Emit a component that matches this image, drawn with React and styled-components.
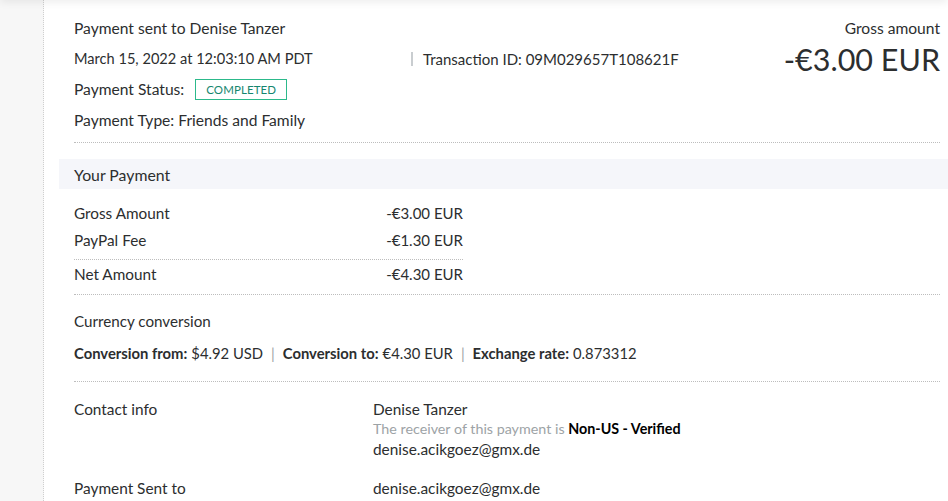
import React from "react";
import styled, { createGlobalStyle } from "styled-components";

const Global = createGlobalStyle`
  html, body { margin: 0; padding: 0; background: #fff; }
  body { font-family: Lato, "Noto Sans", sans-serif; color: #2c2e2f; }
`;

const Page = styled.div`
  display: flex;
  width: 948px;
  height: 501px;
  overflow: hidden;
  position: relative;
`;

const TopShadow = styled.div`
  position: absolute;
  left: 0;
  right: 0;
  top: -10px;
  height: 10px;
  box-shadow: 0 2px 8px rgba(0, 0, 0, 0.08);
`;

const Gutter = styled.div`
  width: 43px;
  flex: none;
  background: #f7f7f7;
  border-right: 1px dotted #cfcfcf;
`;

const Main = styled.div`
  flex: 1;
  padding: 13px 0 0 15px;
  min-width: 0;
`;

const Inset = styled.div`
  padding: 0 8px 0 15px;
`;

const Header = styled.div`
  display: flex;
  justify-content: space-between;
`;

const HeaderLeft = styled.div`
  display: flex;
  flex-direction: column;
`;

const Line = styled.div`
  height: ${(p) => p.$h || 30}px;
  display: flex;
  align-items: center;
  font-size: ${(p) => p.$fs || 15.6}px;
  white-space: nowrap;
`;

const DateText = styled.span`
  width: 337px;
  font-size: 14.6px;
`;

const Divider = styled.span`
  display: inline-block;
  width: 2px;
  height: 14px;
  background: #c9cdd0;
  margin-right: 10px;
`;

const Badge = styled.span`
  margin-left: 11px;
  border: 1px solid #2cb98b;
  color: #16866e;
  font-size: 11.5px;
  letter-spacing: 0.1px;
  height: 19px;
  padding: 0 10px;
  display: inline-flex;
  align-items: center;
`;

const HeaderRight = styled.div`
  display: flex;
  flex-direction: column;
  align-items: flex-end;
`;

const GrossLabel = styled.div`
  font-size: 15.6px;
  line-height: 30px;
`;

const BigAmount = styled.div`
  font-size: 30.5px;
  line-height: 34px;
  margin-top: -1px;
`;

const Dotted = styled.div`
  border-top: 1px dotted #bdbdbd;
  margin: ${(p) => p.$m || "0"};
`;

const Band = styled.div`
  background: #f5f6fa;
  height: 30px;
  display: flex;
  align-items: center;
  padding-left: 15px;
  font-size: 15.8px;
  margin-top: 16px;
`;

const Table = styled.div`
  width: 389px;
  padding-top: 10px;
`;

const Row = styled.div`
  display: flex;
  justify-content: space-between;
  height: 27px;
  align-items: center;
  font-size: 15.3px;
`;

const Amount = styled.span`
  font-size: 15px;
`;

const SubTitle = styled.div`
  font-size: 15.2px;
  height: 26px;
  display: flex;
  align-items: center;
  margin-top: 13px;
`;

const ConvLine = styled.div`
  font-size: 14.8px;
  height: 30px;
  display: flex;
  align-items: center;
  margin-top: 4px;
  white-space: nowrap;
  b { font-weight: 700; margin-right: 4px; }
`;

const Pipe = styled.span`
  color: #9da3a6;
  margin: 0 8px;
`;

const InfoRow = styled.div`
  display: flex;
  font-size: 15.4px;
  margin-top: ${(p) => p.$mt || 0}px;
`;

const InfoLabel = styled.div`
  width: 299px;
  flex: none;
  line-height: 20px;
`;

const InfoValue = styled.div`
  display: flex;
  flex-direction: column;
  line-height: 20px;
`;

const Muted = styled.span`
  color: #9da3a6;
  font-size: 14.3px;
  b { color: #000; font-weight: 700; }
`;

export default function App() {
  return (
    <>
      <Global />
      <Page>
        <TopShadow />
        <Gutter />
        <Main>
          <Inset>
            <Header>
              <HeaderLeft>
                <Line>Payment sent to Denise Tanzer</Line>
                <Line $h={31} $fs={15}>
                  <DateText>March 15, 2022 at 12:03:10 AM PDT</DateText>
                  <Divider />
                  Transaction ID: 09M029657T108621F
                </Line>
                <Line>
                  Payment Status:
                  <Badge>COMPLETED</Badge>
                </Line>
                <Line $h={31}>Payment Type: Friends and Family</Line>
              </HeaderLeft>
              <HeaderRight>
                <GrossLabel>Gross amount</GrossLabel>
                <BigAmount>-€3.00 EUR</BigAmount>
              </HeaderRight>
            </Header>
            <Dotted $m="7px 0 0 0" />
          </Inset>
          <Band>Your Payment</Band>
          <Inset>
            <Table>
              <Row>
                <span>Gross Amount</span>
                <Amount>-€3.00 EUR</Amount>
              </Row>
              <Row>
                <span>PayPal Fee</span>
                <Amount>-€1.30 EUR</Amount>
              </Row>
              <Dotted $m="6px 0 0 0" />
              <Row>
                <span>Net Amount</span>
                <Amount>-€4.30 EUR</Amount>
              </Row>
            </Table>
            <Dotted $m="7px 0 0 0" />
            <SubTitle>Currency conversion</SubTitle>
            <ConvLine>
              <b>Conversion from:</b> $4.92 USD
              <Pipe>|</Pipe>
              <b>Conversion to:</b> €4.30 EUR
              <Pipe>|</Pipe>
              <b>Exchange rate:</b> 0.873312
            </ConvLine>
            <Dotted $m="13px 0 0 0" />
            <InfoRow $mt={17}>
              <InfoLabel>Contact info</InfoLabel>
              <InfoValue>
                <span>Denise Tanzer</span>
                <Muted>
                  The receiver of this payment is <b>Non-US - Verified</b>
                </Muted>
                <span>denise.acikgoez@gmx.de</span>
              </InfoValue>
            </InfoRow>
            <InfoRow $mt={19}>
              <InfoLabel>Payment Sent to</InfoLabel>
              <InfoValue>
                <span>denise.acikgoez@gmx.de</span>
              </InfoValue>
            </InfoRow>
          </Inset>
        </Main>
      </Page>
    </>
  );
}
